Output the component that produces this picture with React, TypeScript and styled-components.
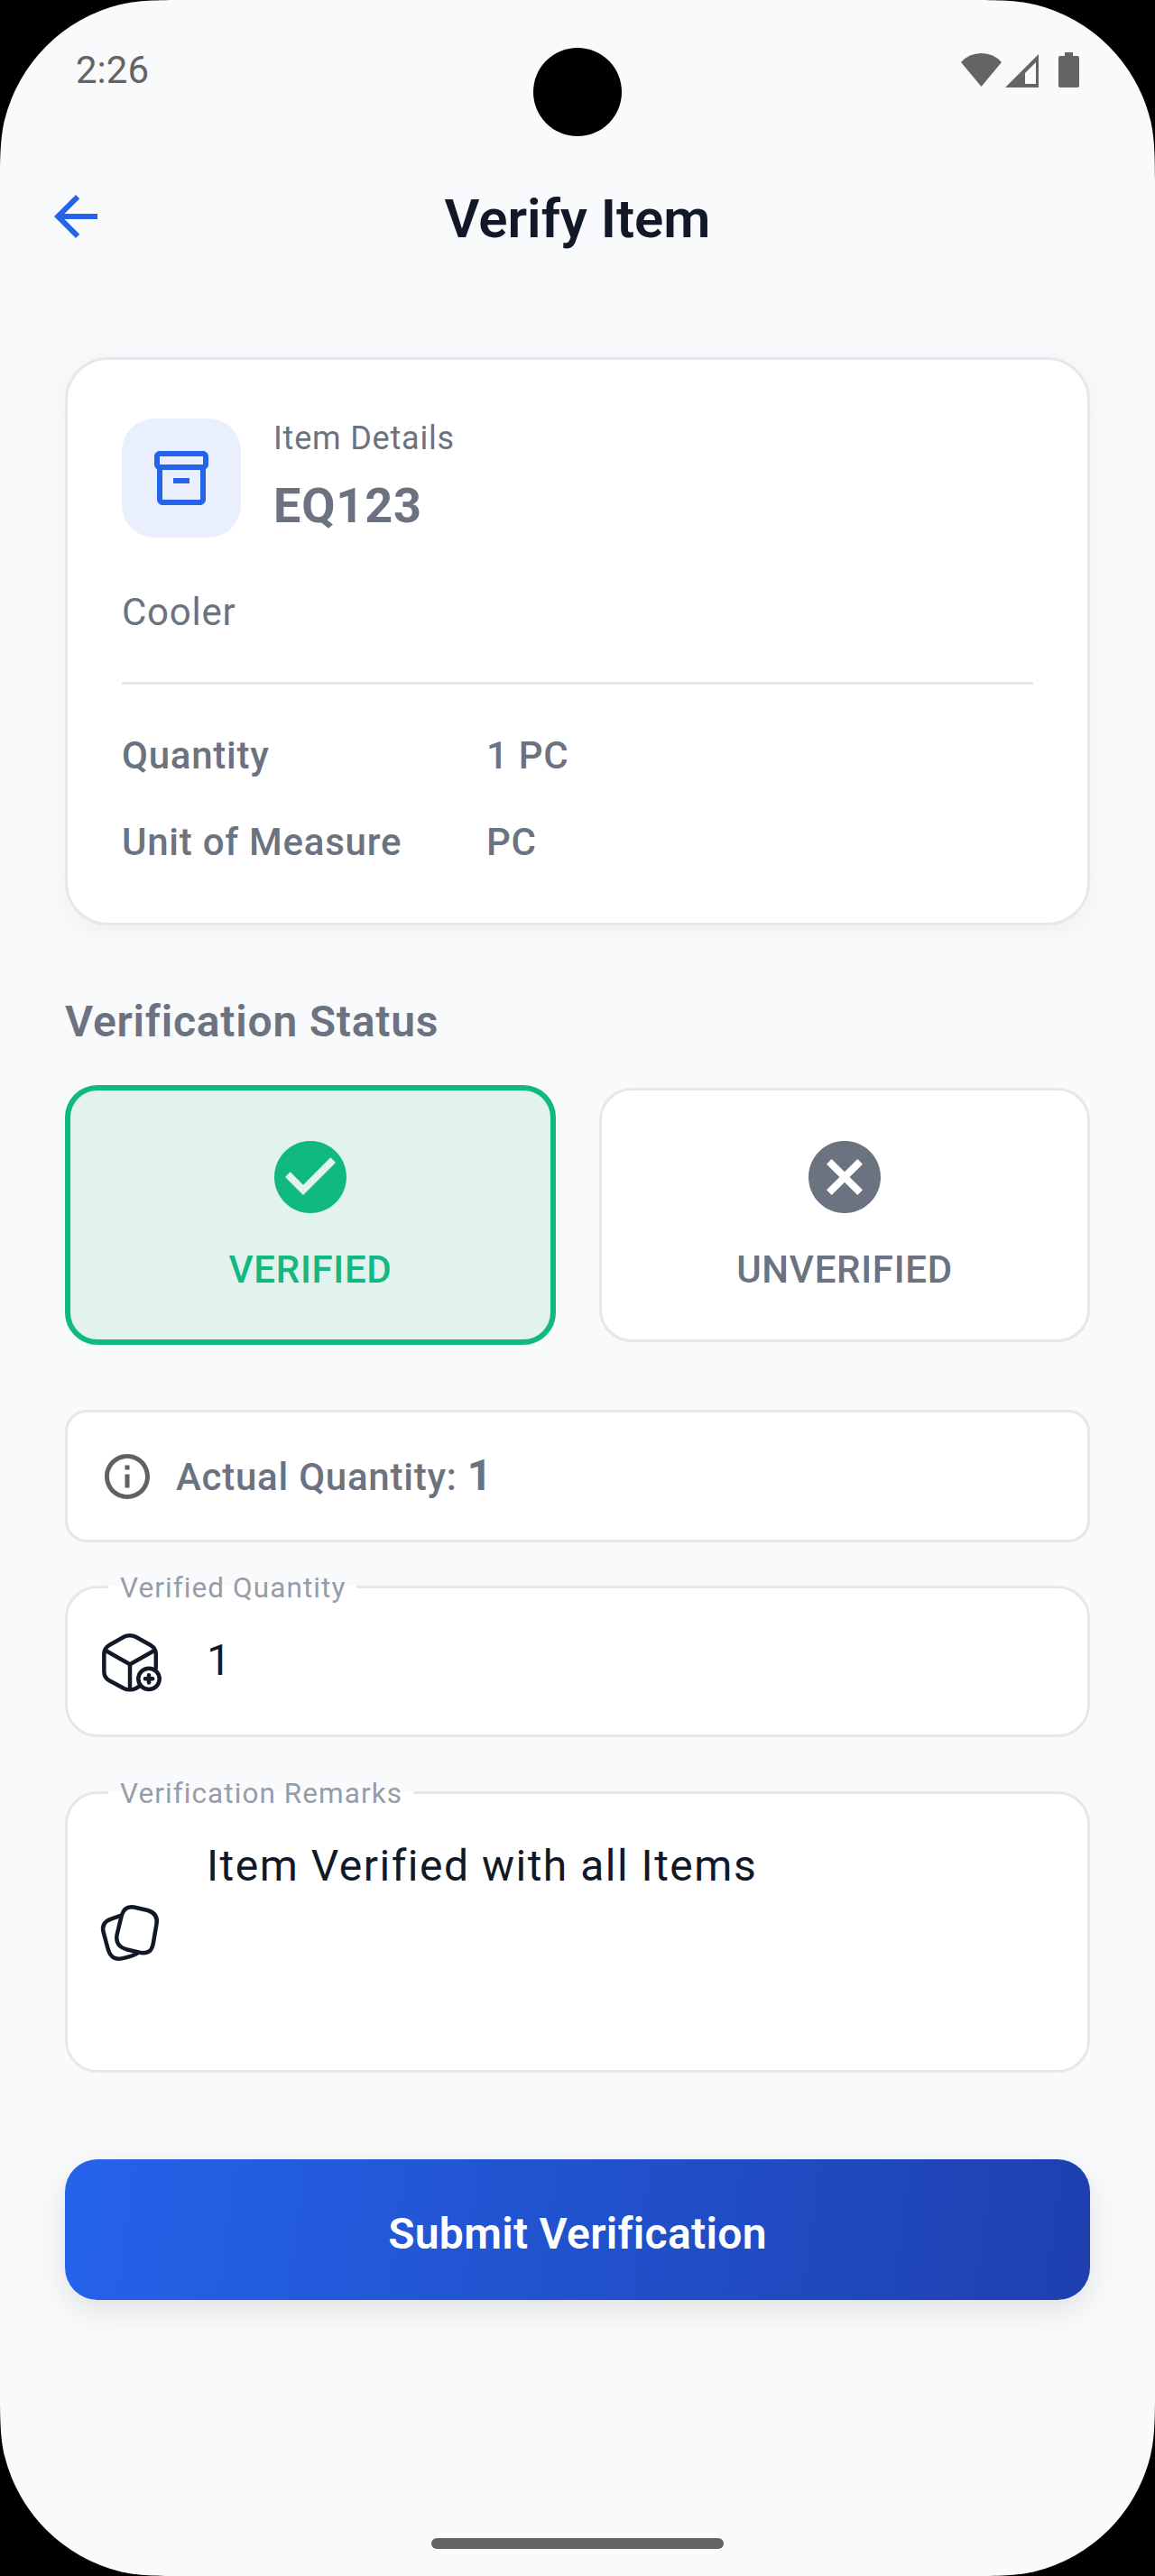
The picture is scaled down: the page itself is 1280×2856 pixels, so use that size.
import React from "react";
import styled, { createGlobalStyle } from "styled-components";

const Global = createGlobalStyle`
  *, *::before, *::after { box-sizing: border-box; }
  body { margin: 0; background: #000; }
  p, h1, h2 { margin: 0; }
`;

const Screen = styled.div`
  width: 1280px;
  height: 2856px;
  display: flex;
  flex-direction: column;
  background: #f9fafc;
  /* circular display corners that ease into the straight edges */
  clip-path: path("M0 200C0 168 1.1 149 5.1 133A175 175 0 0 1 133 5.1C149 1.1 168 0 200 0H1080C1112 0 1131 1.1 1147 5.1A175 175 0 0 1 1274.9 133C1278.9 149 1280 168 1280 200V2656C1280 2688 1278.9 2707 1274.9 2723A175 175 0 0 1 1147 2850.9C1131 2854.9 1112 2856 1080 2856H200C168 2856 149 2854.9 133 2850.9A175 175 0 0 1 5.1 2723C1.1 2707 0 2688 0 2656Z");
  overflow: hidden;
  font-family: Roboto, "Liberation Sans", sans-serif;
  color: #6b7280;
  position: relative;
`;

const Camera = styled.div`
  position: absolute;
  left: 591px;
  top: 53px;
  width: 98px;
  height: 98px;
  border-radius: 50%;
  background: #000;
`;

const StatusBar = styled.div`
  height: 156px;
  padding: 53px 84px 0 84px;
  display: flex;
  justify-content: space-between;
  align-items: flex-start;
  font-size: 42px;
  line-height: 49px;
  color: #646464;
`;

const StatusIcons = styled.svg`
  width: 132px;
  height: 40px;
  margin-top: 4px;
`;

const AppBar = styled.header`
  height: 168px;
  padding: 0 48px;
  display: grid;
  grid-template-columns: 72px 1fr 72px;
  align-items: center;
`;

const BackIcon = styled.svg`
  width: 72px;
  height: 72px;
  fill: #2563eb;
`;

const Title = styled.h1`
  font-size: 60px;
  line-height: 84px;
  font-weight: 600;
  color: #111827;
  text-align: center;
  padding-top: 5px;
`;

const Content = styled.main`
  padding: 72px 72px 0;
  display: flex;
  flex-direction: column;
`;

const Card = styled.section`
  height: 630px;
  border: 3px solid #e5e7eb;
  border-radius: 48px;
  background: #fff;
  padding: 60px;
  box-shadow: 0 6px 30px rgba(0, 0, 0, 0.05);
`;

const CardHeader = styled.div`
  height: 142px;
  display: flex;
  align-items: center;
  gap: 36px;
`;

const IconTile = styled.div`
  width: 132px;
  height: 132px;
  border-radius: 36px;
  background: #e9effd;
  display: flex;
  align-items: center;
  justify-content: center;
`;

const Glyph = styled.svg<{ $size: number; $color: string }>`
  width: ${(p) => p.$size}px;
  height: ${(p) => p.$size}px;
  fill: ${(p) => p.$color};
  flex: none;
  display: block;
`;

const Caption = styled.p`
  font-size: 36px;
  line-height: 48px;
  letter-spacing: 0.8px;
`;

const ItemCode = styled.p`
  font-size: 54px;
  line-height: 76px;
  font-weight: 700;
  letter-spacing: 0.85px;
  margin-top: 13px;
`;

const Description = styled.p`
  margin-top: 48px;
  font-size: 42px;
  line-height: 60px;
  letter-spacing: 0.75px;
`;

const Divider = styled.div`
  height: 3px;
  margin: 47px 0 49px;
  background: #e5e7eb;
`;

const DetailRow = styled.div`
  display: grid;
  grid-template-columns: 2fr 3fr;
  font-size: 42px;
  line-height: 60px;
  font-weight: 500;
  letter-spacing: 0.75px;
  & + & { margin-top: 36px; }
`;

const SectionTitle = styled.h2`
  margin-top: 71px;
  height: 72px;
  font-size: 48px;
  line-height: 72px;
  font-weight: 600;
  letter-spacing: 0.78px;
`;

const Choices = styled.div`
  margin-top: 34px;
  height: 288px;
  display: grid;
  grid-template-columns: 1fr 1fr;
  align-items: center;
  gap: 48px;
`;

const Choice = styled.div<{ $selected?: boolean }>`
  display: flex;
  flex-direction: column;
  align-items: center;
  gap: 25px;
  padding: 48px 48px 47px;
  border: ${(p) => (p.$selected ? "6px solid #10b981" : "3px solid #e5e7eb")};
  border-radius: 36px;
  background: ${(p) => (p.$selected ? "#e2f2ee" : "#fff")};
  color: ${(p) => (p.$selected ? "#10b981" : "#6b7280")};
  font-size: 42px;
  line-height: 60px;
  font-weight: 500;
  letter-spacing: 0.7px;
`;

const InfoBox = styled.div`
  margin-top: 72px;
  height: 147px;
  display: flex;
  align-items: center;
  gap: 24px;
  padding: 0 36px;
  border: 3px solid #e5e7eb;
  border-radius: 24px;
  background: #fff;
`;

const InfoText = styled.p`
  font-size: 42px;
  line-height: 72px;
  font-weight: 500;
  letter-spacing: 0.75px;
  strong { font-size: 48px; font-weight: 700; }
`;

const Field = styled.div<{ $height: number; $gap: number }>`
  position: relative;
  height: ${(p) => p.$height}px;
  margin-top: ${(p) => p.$gap}px;
  display: flex;
  padding: 0 33px;
  border: 3px solid #e5e7eb;
  border-radius: 36px;
  background: #fff;
`;

const FieldLabel = styled.label`
  position: absolute;
  left: 45px;
  top: -20px;
  padding: 0 12px 0 13px;
  font-size: 31.5px;
  line-height: 40px;
  letter-spacing: 1.08px;
  color: #979ca7;
  &::before {
    content: "";
    position: absolute;
    inset: 17px 0 auto 0;
    height: 3px;
    background: #fff;
  }
  span { position: relative; }
`;

const FieldIcon = styled.svg`
  width: 72px;
  height: 72px;
  align-self: center;
  flex: none;
  fill: none;
  stroke: #111827;
  stroke-width: 1.5;
  stroke-linecap: round;
  stroke-linejoin: round;
`;

const FieldValue = styled.p`
  margin: 44px 0 0 49px;
  font-size: 48px;
  line-height: 72px;
  letter-spacing: 1.5px;
  color: #111827;
`;

const Submit = styled.button`
  margin-top: 96px;
  height: 156px;
  border: 0;
  border-radius: 36px;
  background: linear-gradient(97.8deg, #2563eb, #1e40af);
  box-shadow: 0 12px 36px rgba(0, 0, 0, 0.1);
  color: #fff;
  font: 600 48px/72px Roboto, sans-serif;
  letter-spacing: 0.3px;
  padding: 10px 0 0;
`;

const HomeBar = styled.div`
  width: 324px;
  height: 12px;
  border-radius: 6px;
  background: #646464;
  margin: auto auto 30px;
`;

export default function App() {
  return (
    <>
      <Global />
      <Screen>
        <Camera />
        <StatusBar>
          <span>2:26</span>
          <StatusIcons viewBox="0 0 132 40" fill="#646464">
            <path d="M1 12Q10 2 23.500 2T46 12L23.500 39Z" />
            <path d="M87 3V40H50ZM84 12L72 24V36H84Z" fillRule="evenodd" />
            <path d="M116 1h9v4h5q2 0 2 2v31q0 2-2 2h-19q-2 0-2-2V7q0-2 2-2h5Z" />
          </StatusIcons>
        </StatusBar>
        <AppBar>
          <BackIcon viewBox="0 0 24 24">
            <path d="M20 11H7.830l5.590-5.590L12 4l-8 8 8 8 1.410-1.410L7.830 13H20v-2z" />
          </BackIcon>
          <Title>Verify Item</Title>
        </AppBar>
        <Content>
          <Card>
            <CardHeader>
              <IconTile>
                <Glyph $size={72} $color="#2563eb" viewBox="0 0 24 24">
                  <path d="M20 2H4c-1 0-2 .9-2 2v3.010c0 .72.43 1.340 1 1.690V20c0 1.100 1.100 2 2 2h14c.9 0 2-.9 2-2V8.700c.57-.35 1-.97 1-1.690V4c0-1.100-1-2-2-2zm-1 18H5V9h14v11zm1-13H4V4h16v3zM9 12h6v2H9z" />
                </Glyph>
              </IconTile>
              <div>
                <Caption>Item Details</Caption>
                <ItemCode>EQ123</ItemCode>
              </div>
            </CardHeader>
            <Description>Cooler</Description>
            <Divider />
            <DetailRow>
              <span>Quantity</span>
              <span>1 PC</span>
            </DetailRow>
            <DetailRow>
              <span>Unit of Measure</span>
              <span>PC</span>
            </DetailRow>
          </Card>

          <SectionTitle>Verification Status</SectionTitle>
          <Choices>
            <Choice $selected>
              <Glyph $size={96} $color="#10b981" viewBox="0 0 24 24">
                <path d="M12 2C6.480 2 2 6.480 2 12s4.480 10 10 10 10-4.480 10-10S17.520 2 12 2zm-2 15l-5-5 1.410-1.410L10 14.170l7.590-7.590L19 8l-9 9z" />
              </Glyph>
              VERIFIED
            </Choice>
            <Choice>
              <Glyph $size={96} $color="#6b7280" viewBox="0 0 24 24">
                <path d="M12 2C6.470 2 2 6.470 2 12s4.470 10 10 10 10-4.470 10-10S17.530 2 12 2zm5 13.590L15.590 17 12 13.410 8.410 17 7 15.590 10.590 12 7 8.410 8.410 7 12 10.590 15.590 7 17 8.410 13.410 12 17 15.590z" />
              </Glyph>
              UNVERIFIED
            </Choice>
          </Choices>

          <InfoBox>
            <Glyph $size={60} $color="#616161" viewBox="0 0 24 24">
              <path d="M11 7h2v2h-2zm0 4h2v6h-2zm1-9C6.480 2 2 6.480 2 12s4.480 10 10 10 10-4.480 10-10S17.520 2 12 2zm0 18c-4.410 0-8-3.590-8-8s3.590-8 8-8 8 3.590 8 8-3.590 8-8 8z" />
            </Glyph>
            <InfoText>
              Actual Quantity: <strong>1</strong>
            </InfoText>
          </InfoBox>

          <Field $height={168} $gap={48}>
            <FieldLabel>
              <span>Verified Quantity</span>
            </FieldLabel>
            <FieldIcon viewBox="0 0 24 24">
              <path d="M21.600 14.400V9.200C21.600 7.800 20.900 6.800 19.800 6.100L14.100 2.900C12.900 2.250 11 2.250 9.800 2.900L4.500 5.900C3.200 6.700 2.450 7.900 2.450 9.200V15.800C2.450 17.200 3.200 18.400 4.400 19.100L9.800 22C11 22.600 12.900 22.600 14.100 22L15.700 21.100" />
              <path d="M3.200 8.100L12 13.100L21 8M12 13.100V22.200" />
              <circle cx="19" cy="18.450" r="3.900" />
              <path d="M17.600 18.450H20.400M19 17.050V19.850" />
            </FieldIcon>
            <FieldValue>1</FieldValue>
          </Field>

          <Field $height={312} $gap={60}>
            <FieldLabel>
              <span>Verification Remarks</span>
            </FieldLabel>
            <FieldIcon viewBox="0 0 24 24">
              <path d="M13.500 2.850L18.600 4C21.200 4.800 22.300 6.500 21.800 9.200L20.600 16.200C20.100 19 18.700 20 16.200 19.700L11 18.500C8 17.700 6.700 15.800 7.200 13L8.900 6C9.600 3.500 11 2.400 13.500 2.850Z" />
              <path d="M8.800 5.900L5.200 7.100C2.600 8 1.600 9.600 2.200 12L3.700 17.600C4.500 21 6 22.400 9 21.800C11 21.400 13.200 20.800 15 19.700" />
            </FieldIcon>
            <FieldValue>Item Verified with all Items</FieldValue>
          </Field>

          <Submit>Submit Verification</Submit>
        </Content>
        <HomeBar />
      </Screen>
    </>
  );
}
